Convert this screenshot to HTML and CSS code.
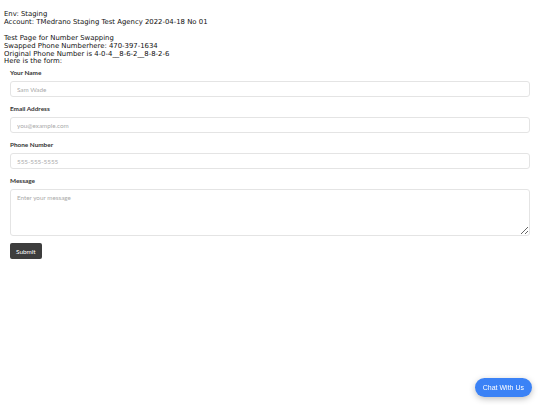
FILE: index.html
```html
<!DOCTYPE html>
<html lang="en-US">
<head>
  <meta charset="UTF-8">
  <title>Number Swapping Test</title>
  <link rel="stylesheet" href="styles.css">
</head>
<body>

<div class=info>
  Env: Staging<br>
  Account: TMedrano Staging Test Agency 2022-04-18 No 01<br>
  <br>
  Test Page for Number Swapping<br>
  Swapped Phone Numberhere: 470-397-1634<br>
  Original Phone Number is 4-0-4__8-6-2__8-8-2-6<br>
  Here is the form:
</div>

<form class=form>
  <label>Your Name</label>
  <input type=text placeholder="Sam Wade">
  <label>Email Address</label>
  <input type=email placeholder="you@example.com">
  <label>Phone Number</label>
  <input type=tel placeholder="555-555-5555">
  <label>Message</label>
  <textarea placeholder="Enter your message"></textarea>
  <button type=button class=submit>Submit</button>
</form>

<button class=chat>Chat With Us</button>

</body>
</html>
```

FILE: styles.css
```css
body {
  margin: 0;
  padding: 11px 4px 0;
  font: 6.9px/7.9px "DejaVu Sans", sans-serif;
  color: #111;
}
.form {
  display: flex;
  flex-direction: column;
  align-items: flex-start;
  padding: 3px 6px 0;
  font-family: Lato, "Open Sans", sans-serif;
}
.form label {
  font-size: 6.4px;
  font-weight: bold;
  color: #333;
  line-height: 8px;
  margin-bottom: 4px;
}
.form input, .form textarea {
  box-sizing: border-box;
  width: 520px;
  height: 16px;
  margin: 0 0 8px;
  padding: 0 6px;
  border: 1px solid #e4e4e4;
  border-radius: 3px;
  font: 6.3px Lato, sans-serif;
  color: #555;
  background: #fff;
}
.form textarea {
  height: 47px;
  padding: 4px 6px;
  margin-bottom: 7px;
}
::placeholder { color: #aaa; }
.submit {
  background: #3d3d3d;
  color: #fff;
  border: none;
  border-radius: 2px;
  height: 16px;
  padding: 0 6px;
  font: 6.4px Lato, sans-serif;
  cursor: pointer;
}
.chat {
  position: fixed;
  right: 8px;
  bottom: 8px;
  height: 19px;
  padding: 0 8px;
  border: none;
  border-radius: 10px;
  background: #3b82f6;
  color: #fff;
  font: 7px "Liberation Sans", Arial, sans-serif;
  box-shadow: 0 2px 6px rgba(0,0,0,0.25);
  cursor: pointer;
}
```
